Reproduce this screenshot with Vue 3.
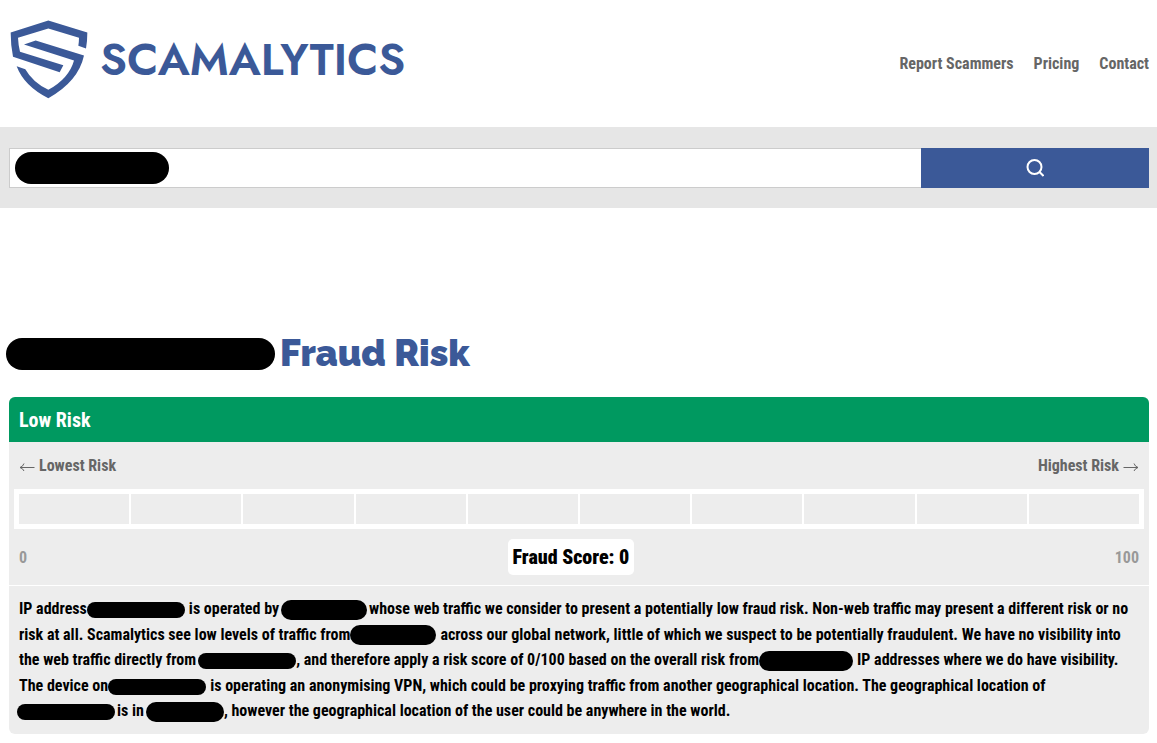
<script setup>
import { ref } from 'vue'

const query = ref('')
const segments = 10
const score = 0
</script>

<template>
  <div class="page">
    <header class="header">
      <a class="brand" href="#" aria-label="Scamalytics home">
        <svg class="shield" viewBox="30 31 234 236" aria-hidden="true">
          <path d="M145 32 L262 68 Q262 94 258 116 L235 108 Q237 95 237 84 L145 56 L54 84 Q55 106 60 126 L190 166 L179 187 L39 141 Q32 106 32 68 Z" />
          <path d="M72 104 L107 92 L252 137 Q235 215 145 265 Q72 228 50 169 L76 178 Q98 217 145 240 Q207 206 222 152 Z" />
        </svg>
        <span class="wordmark">SCAMALYTICS</span>
      </a>
      <nav class="nav">
        <a href="#">Report Scammers</a>
        <a href="#">Pricing</a>
        <a href="#">Contact</a>
      </nav>
    </header>

    <form class="search" @submit.prevent>
      <div class="field">
        <input v-model="query" type="text" aria-label="IP address" />
        <span class="mask mask-field"></span>
      </div>
      <button type="submit" aria-label="Search">
        <svg viewBox="0 0 18 18" aria-hidden="true">
          <circle cx="8.500" cy="8" r="7" />
          <path d="M13.500 13 L17.500 17" />
        </svg>
      </button>
    </form>

    <main class="main">
      <h1><span class="mask mask-title"></span>Fraud Risk</h1>

      <section class="card">
        <h2>Low Risk</h2>
        <div class="row labels">
          <span><svg class="arrow" viewBox="0 0 16 10" aria-hidden="true"><path d="M15.500 6.500 H1 M5 2.500 Q4 5.500 1 6.500 Q4 7.500 5 10" /></svg>Lowest Risk</span>
          <span>Highest Risk<svg class="arrow" viewBox="0 0 16 10" aria-hidden="true"><path d="M0.500 6.500 H15 M11 2.500 Q12 5.500 15 6.500 Q12 7.500 11 10" /></svg></span>
        </div>
        <div class="meter">
          <span v-for="n in segments" :key="n"></span>
        </div>
        <div class="row scale">
          <span>0</span>
          <strong>Fraud Score: {{ score }}</strong>
          <span>100</span>
        </div>
        <p>
          IP address<i class="mask ip"></i>is operated by<i class="mask isp snug"></i>whose web traffic we consider to present a potentially low fraud risk. Non-web traffic may present a different risk or no<br />
          risk at all. Scamalytics see low levels of traffic from<i class="mask isp"></i>across our global network, little of which we suspect to be potentially fraudulent. We have no visibility into<br />
          the web traffic directly from<i class="mask ip wide-gap"></i>, and therefore apply a risk score of 0/100 based on the overall risk from<i class="mask isp wide"></i>IP addresses where we do have visibility.<br />
          The device on<i class="mask ip"></i>is operating an anonymising VPN, which could be proxying traffic from another geographical location. The geographical location of<br />
          <i class="mask ip lead"></i>is in<i class="mask country"></i>, however the geographical location of the user could be anywhere in the world.
        </p>
      </section>
    </main>
  </div>
</template>

<style>
body {
  background: #fff;
}
</style>

<style scoped>
* {
  box-sizing: border-box;
}
.page {
  font-family: "Roboto Condensed", Roboto, "Liberation Sans", sans-serif;
  font-weight: 700;
  font-size: 16px;
  color: #000;
}
.header {
  display: flex;
  align-items: center;
  justify-content: space-between;
  height: 127px;
  padding: 0 8px 0 10px;
}
.brand {
  display: flex;
  align-items: center;
  gap: 12px;
  height: 80px;
  margin-bottom: 8px;
  color: #3b5998;
  text-decoration: none;
}
.shield {
  width: 78px;
  height: 79px;
  fill: #3b5998;
}
.wordmark {
  font-family: Jost, Lato, sans-serif;
  font-size: 45px;
  font-weight: 600;
  line-height: 58px;
}
.nav {
  display: flex;
  gap: 20px;
}
.nav a {
  color: #666;
  text-decoration: none;
}
.search {
  display: flex;
  padding: 21px 8px 20px 9px;
  background: #e6e6e6;
}
.field {
  position: relative;
  flex: 4;
}
.field input {
  display: block;
  width: 100%;
  height: 40px;
  padding: 0 10px;
  border: 1px solid #ccc;
  border-right: 0;
  border-radius: 0;
  background: #fff;
  font: inherit;
}
.search button {
  flex: 1;
  height: 40px;
  padding: 0;
  border: 0;
  background: #3b5998;
}
.search button svg {
  display: block;
  width: 18px;
  height: 18px;
  margin: 0 auto;
  fill: none;
  stroke: #fff;
  stroke-width: 2;
}
.mask {
  display: inline-block;
  border-radius: 16px;
  background: #000;
  vertical-align: middle;
}
.mask-field {
  position: absolute;
  left: 6px;
  top: 4px;
  width: 154px;
  height: 32px;
}
.mask-title {
  width: 269px;
  height: 32px;
  margin: 2px 5px 0 0;
}
.main {
  padding: 0 8px 0 9px;
}
h1 {
  display: flex;
  align-items: center;
  margin: 121px 0 20px -3px;
  color: #3b5998;
  font: 900 37px/48px Raleway, Lato, sans-serif;
}
.card {
  overflow: hidden;
  border-radius: 6px;
  background: #ededed;
}
h2 {
  margin: 0;
  padding: 1px 10px 0;
  background: #009960;
  color: #fff;
  font-size: 20px;
  line-height: 44px;
}
.row {
  display: flex;
  align-items: center;
  justify-content: space-between;
  padding: 0 10px;
}
.labels {
  height: 47px;
  color: #666;
}
.labels span {
  display: flex;
  align-items: center;
  gap: 4px;
}
.arrow {
  width: 16px;
  height: 10px;
  fill: none;
  stroke: #666;
}
.meter {
  display: flex;
  gap: 2px;
  margin: 0 5px;
  padding: 5px;
  background: #fff;
}
.meter span {
  flex: 1;
  height: 30px;
  background: #ededed;
}
.scale {
  height: 57px;
  border-bottom: 1px solid #fff;
  color: #999;
}
.scale strong {
  padding: 0 5px;
  border-radius: 5px;
  background: #fff;
  color: #000;
  font-size: 20px;
  line-height: 36px;
}
p {
  margin: 0;
  padding: 10px 0 10px 10px;
  line-height: 1.6;
}
.ip {
  width: 98px;
  height: 16px;
  margin: 0 4px 0 0;
}
.isp {
  width: 86px;
  height: 20px;
  margin: 0 4px 0 0;
}
.wide {
  width: 94px;
}
.snug {
  margin: 0 2px;
}
.wide-gap {
  margin: 0 0 0 2px;
}
.lead {
  margin: 0 2px 0 -2px;
}
.country {
  width: 78px;
  height: 20px;
  margin-left: 2px;
}
</style>
